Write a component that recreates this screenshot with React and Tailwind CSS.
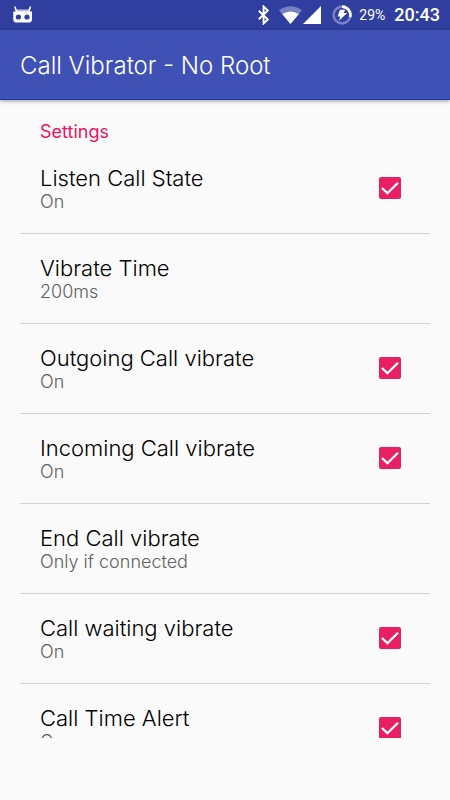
import { useState } from 'react';

const initialSettings = [
    { id: 'listen', title: 'Listen Call State', checked: true },
    { id: 'time', title: 'Vibrate Time', value: '200ms' },
    { id: 'outgoing', title: 'Outgoing Call vibrate', checked: true },
    { id: 'incoming', title: 'Incoming Call vibrate', checked: true },
    { id: 'end', title: 'End Call vibrate', value: 'Only if connected' },
    { id: 'waiting', title: 'Call waiting vibrate', checked: true },
    { id: 'alert', title: 'Call Time Alert', checked: true },
];

function StatusBar() {
    return (
        <div className="flex h-[30px] shrink-0 items-center justify-between bg-[#303f9f] pr-[10px] pl-3 font-['Roboto',sans-serif] font-normal text-white">
            <svg width="21" height="18" viewBox="0 0 21 18" aria-label="Cyanogen">
                <path d="M3 1.2L4.4 5M18.3 1.2L16.9 5" stroke="#fff" strokeWidth="1.6" strokeLinecap="round" />
                <path d="M4.5 3.4h12.3l1.2 3.2H3.3z" fill="#fff" opacity="0.7" />
                <path d="M1.3 5.6h18.7v8a2.8 2.8 0 0 1-2.8 2.8H4.1a2.8 2.8 0 0 1-2.8-2.8z" fill="#fff" />
                <circle cx="6.4" cy="11" r="2.6" fill="#303f9f" />
                <circle cx="15" cy="11" r="2.6" fill="#303f9f" />
            </svg>
            <div className="flex items-center">
                <svg width="14" height="20" viewBox="0 0 14 20" aria-label="Bluetooth">
                    <path
                        d="M1.8 5.7l9 8.8-4.2 4V1.5l4.2 4-9 8.8"
                        fill="none"
                        stroke="#fff"
                        strokeWidth="1.9"
                    />
                </svg>
                <svg className="ml-2" width="23" height="18" viewBox="0 0 23 18" aria-label="Wi-Fi">
                    <path d="M0 4.2Q11.5 -3.6 23 4.2L11.5 18z" fill="#fff" opacity="0.35" />
                    <path d="M3.2 8Q11.5 3 19.8 8L11.5 18z" fill="#fff" />
                </svg>
                <svg className="ml-px" width="19" height="18" viewBox="0 0 19 18" aria-label="Signal">
                    <path d="M18 0v18H0z" fill="#fff" />
                </svg>
                <svg className="ml-[10px]" width="20" height="20" viewBox="0 0 20 20" aria-label="Charging">
                    <circle cx="10" cy="10" r="8.4" fill="none" stroke="#fff" strokeWidth="2.6" opacity="0.35" />
                    <path d="M10 1.6A8.4 8.4 0 0 1 18.1 12.2" fill="none" stroke="#fff" strokeWidth="2.6" />
                    <path d="M8 4.8h5.2L11.6 8h3.6L7 15.8l1.3-4.4H5.6z" fill="#fff" />
                </svg>
                <span className="ml-[7px] text-sm">29%</span>
                <span className="ml-[9px] text-lg font-medium">20:43</span>
            </div>
        </div>
    );
}

function SettingText({ title, hint }) {
    return (
        <span className="flex flex-col text-left">
            <span className="text-[22px] leading-7 text-black">{title}</span>
            <span className="text-[18px] leading-5 text-[#606060]">{hint}</span>
        </span>
    );
}

function CheckSetting({ setting, onToggle }) {
    return (
        <label htmlFor={setting.id} className="flex h-[89px] items-center justify-between pr-[29px] pb-0.5 pl-5">
            <SettingText title={setting.title} hint={setting.checked ? 'On' : 'Off'} />
            <span className="grid">
                <input
                    id={setting.id}
                    type="checkbox"
                    checked={setting.checked}
                    onChange={() => onToggle(setting.id)}
                    className="peer col-start-1 row-start-1 size-[22px] appearance-none rounded-xs border-2 border-[#737373] checked:border-[#e91e63] checked:bg-[#e91e63]"
                />
                <svg
                    className="pointer-events-none invisible col-start-1 row-start-1 peer-checked:visible"
                    width="22"
                    height="22"
                    viewBox="0 0 22 22"
                >
                    <path d="M3 11l5.4 5.2L19 5.7" fill="none" stroke="#fff" strokeWidth="2.3" />
                </svg>
            </span>
        </label>
    );
}

export default function App() {
    const [settings, setSettings] = useState(initialSettings);

    const handleToggle = (id) => {
        setSettings(settings.map((s) => (s.id === id ? { ...s, checked: !s.checked } : s)));
    };

    return (
        <div className="flex h-screen flex-col bg-[#fafafa] pb-[62px] font-['Inter',sans-serif] font-light">
            <StatusBar />
            <header className="z-10 flex h-[70px] shrink-0 items-center border-b border-[#1a3aa8] bg-[#3f51b5] px-5 pt-0.5 shadow-[0_1px_4px_rgba(0,0,0,0.4)]">
                <h1 className="text-[24px] leading-8 text-white">Call Vibrator - No Root</h1>
            </header>
            <main className="min-h-0 flex-1 overflow-hidden px-5">
                <h2 className="px-5 pt-[22px] pb-0.5 text-[18px] leading-5 font-normal text-[#f0125f]">Settings</h2>
                <ul>
                    {settings.map((setting) => (
                        <li key={setting.id} className="border-b border-[#d3d3d3]">
                            {setting.value ? (
                                <button type="button" className="flex h-[89px] w-full items-center px-5 pb-0.5">
                                    <SettingText title={setting.title} hint={setting.value} />
                                </button>
                            ) : (
                                <CheckSetting setting={setting} onToggle={handleToggle} />
                            )}
                        </li>
                    ))}
                </ul>
            </main>
        </div>
    );
}
